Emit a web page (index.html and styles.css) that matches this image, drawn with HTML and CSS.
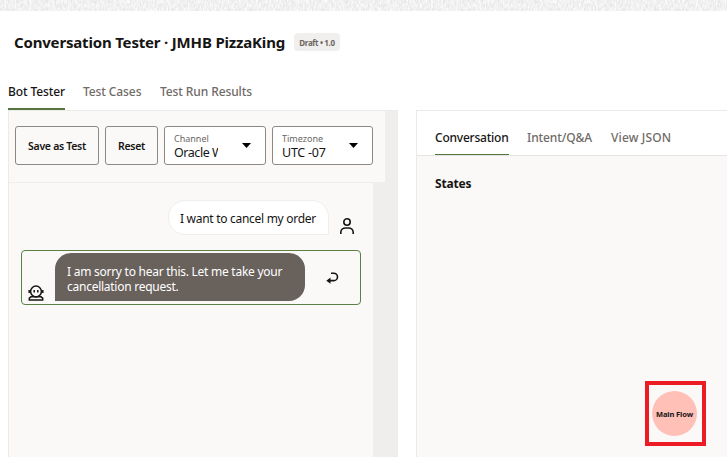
FILE: index.html
```html
<!DOCTYPE html>
<html lang="en">
<head>
<meta charset="utf-8">
<title>Conversation Tester</title>
<link rel="stylesheet" href="styles.css">
</head>
<body>
<svg class="texture" width="727" height="11" aria-hidden="true">
  <filter id="grain" x="0" y="0" width="100%" height="100%" color-interpolation-filters="sRGB">
    <feTurbulence type="fractalNoise" baseFrequency="0.6 0.25" numOctaves="2" seed="4"/>
    <feColorMatrix values="0.16 0 0 0 0.865  0.16 0 0 0 0.865  0.16 0 0 0 0.865  0 0 0 0 1"/>
  </filter>
  <rect width="727" height="11" filter="url(#grain)"/>
</svg>
<header class="header">
  <h1 class="title">Conversation Tester · JMHB PizzaKing</h1>
  <span class="badge">Draft • 1.0</span>
</header>
<nav class="tabs main-tabs">
  <span class="tab active bot"><span>Bot Tester</span></span>
  <span class="tab cases"><span>Test Cases</span></span>
  <span class="tab runs"><span>Test Run Results</span></span>
</nav>
<main class="panels">
  <section class="tester">
    <div class="toolbar">
      <button class="btn save">Save as Test</button>
      <button class="btn reset">Reset</button>
      <div class="select channel">
        <div class="field"><span class="label">Channel</span><span class="value">Oracle Web</span></div>
        <svg class="caret" width="9" height="5" viewBox="0 0 9 5"><path d="M0 0h9L4.500 5z"/></svg>
      </div>
      <div class="select timezone">
        <div class="field"><span class="label">Timezone</span><span class="value">UTC -07</span></div>
        <svg class="caret" width="9" height="5" viewBox="0 0 9 5"><path d="M0 0h9L4.500 5z"/></svg>
      </div>
    </div>
    <div class="chat">
      <div class="user-row">
        <div class="user-bubble">I want to cancel my order</div>
        <svg class="person" width="14" height="16" viewBox="0 0 14 16" fill="none" stroke="#161513" stroke-width="1.600"><circle cx="7" cy="4" r="3.200"/><path d="M.8 16v-1.600C.8 11.700 3 10 5.500 10h3c2.500 0 4.700 1.700 4.700 4.400V16"/></svg>
      </div>
      <div class="bot-row">
        <svg class="robot" width="16" height="16" viewBox="0 0 16 16" fill="none" stroke="#161513" stroke-width="1.500"><circle cx="8" cy="6.500" r="5.400"/><path d="M1.200 5v3M14.800 5v3M1.300 15v-1.800l1.700-1.400h10l1.700 1.400V15z"/><path d="M6.200 5v2.400M9.800 5v2.400"/></svg>
        <div class="bot-bubble">I am sorry to hear this. Let me take your cancellation request.</div>
        <svg class="reply" width="13" height="13" viewBox="0 0 13 13" fill="none" stroke="#161513" stroke-width="1.600"><path d="M5 1.200h2.800a3.700 3.700 0 0 1 0 7.400H2"/><path d="M4.500 5.500v6.300L.3 8.700z" fill="#161513" stroke="none"/></svg>
      </div>
    </div>
  </section>
  <section class="details">
    <nav class="tabs detail-tabs">
      <span class="tab active conv"><span>Conversation</span></span>
      <span class="tab intent"><span>Intent/Q&amp;A</span></span>
      <span class="tab json"><span>View JSON</span></span>
    </nav>
    <div class="states">
      <h2 class="states-title">States</h2>
      <div class="highlight"><div class="node">Main Flow</div></div>
    </div>
  </section>
</main>
</body>
</html>
```
FILE: styles.css
```css
* { box-sizing: border-box; }
body {
  margin: 0;
  width: 727px;
  height: 457px;
  overflow: hidden;
  display: flex;
  flex-direction: column;
  background: #fff;
  color: #161513;
  font-family: "Noto Sans", "Open Sans", sans-serif;
  font-size: 12px;
}
svg { display: block; flex: none; }
.texture { height: 11px; }
.header {
  height: 62px;
  flex: none;
  display: flex;
  align-items: center;
  padding-left: 14px;
  gap: 9px;
}
.title {
  margin: 0;
  width: 271px;
  font-size: 15px;
  font-weight: 700;
  letter-spacing: -0.18px;
  white-space: nowrap;
}
.badge {
  width: 46px;
  height: 18px;
  line-height: 19px;
  border-radius: 4px;
  background: #f1efed;
  color: #6b6560;
  font-size: 8px;
  font-weight: 700;
  letter-spacing: -0.35px;
  text-align: center;
  white-space: nowrap;
}
.tabs { display: flex; flex: none; gap: 18px; }
.tab {
  font-size: 12px;
  font-weight: 500;
  letter-spacing: -0.1px;
  color: #6f6b67;
  white-space: nowrap;
  border-bottom: 2px solid transparent;
}
.active { color: #161513; border-color: #55773f; }
.main-tabs { height: 37px; padding-left: 8px; line-height: 37px; }
.main-tabs .tab { height: 37px; }
.bot { width: 57px; }
.cases { width: 59px; }
.panels {
  flex: 1;
  display: flex;
  gap: 18px;
  padding-left: 8px;
}
.tester {
  width: 390px;
  background: #efeeec;
  border-left: 1px solid #ebeae8;
  border-top: 1px solid #ebeae8;
  display: flex;
  flex-direction: column;
}
.toolbar {
  width: 376px;
  height: 72px;
  padding: 15px 0 0 6px;
  display: flex;
  background: #faf9f8;
  border-bottom: 1px solid #efeeec;
}
.btn, .select {
  height: 39px;
  border: 1px solid #8b8885;
  border-radius: 3px;
}
.btn {
  padding: 0;
  background: transparent;
  color: #161513;
  font: 600 10.5px "Noto Sans", sans-serif;
  letter-spacing: -0.3px;
  white-space: nowrap;
}
.save { width: 84px; margin-right: 6px; }
.reset { width: 53px; margin-right: 6px; }
.select {
  display: flex;
  align-items: center;
  justify-content: space-between;
  background: #fff;
  padding: 0 14px 0 9px;
}
.channel { width: 102px; margin-right: 6px; }
.timezone { width: 101px; }
.field { width: 45px; overflow: hidden; white-space: nowrap; }
.channel .field { width: 44px; }
.label, .value { display: block; }
.label { font-size: 9px; line-height: 12px; color: #6b6763; margin-top: 1px; }
.value { font-size: 12.5px; line-height: 15px; letter-spacing: -0.25px; }
.channel .value { letter-spacing: -0.45px; }
.chat {
  flex: 1;
  width: 364px;
  padding: 17px 12px 0;
  background: #faf9f8;
}
.user-row { display: flex; justify-content: flex-end; gap: 11px; padding-right: 7px; }
.user-bubble {
  width: 161px;
  height: 35px;
  padding-left: 11px;
  line-height: 36px;
  letter-spacing: -0.29px;
  background: #fff;
  border: 1px solid #efeeec;
  border-radius: 17px 17px 0 17px;
  white-space: nowrap;
}
.person { margin-top: 18px; }
.bot-row {
  width: 340px;
  height: 55px;
  margin-top: 15px;
  padding: 2px 0 0 6px;
  display: flex;
  border: 1px solid #5b8045;
  border-radius: 4px;
}
.robot { margin-top: 32px; }
.bot-bubble {
  width: 250px;
  height: 48px;
  margin-left: 11px;
  padding: 11px 15px 0 12px;
  background: #69615c;
  border-radius: 16px 16px 16px 0;
  color: #fff;
  line-height: 15px;
  letter-spacing: -0.26px;
}
.reply { margin: 19px 0 0 21px; }
.details {
  flex: 1;
  display: flex;
  flex-direction: column;
  border-left: 1px solid #ebeae8;
  border-top: 1px solid #ebeae8;
}
.detail-tabs {
  height: 45px;
  padding: 10px 0 0 18px;
  border-bottom: 1px solid #e5e4e2;
  line-height: 34px;
}
.detail-tabs .tab { height: 34px; border-bottom-width: 1px; }
.conv { width: 74px; letter-spacing: -0.22px; }
.intent { width: 66px; }
.json { letter-spacing: 0.15px; }
.states {
  flex: 1;
  display: flex;
  flex-direction: column;
  justify-content: space-between;
  padding: 19px 21px 11px 18px;
  background: #faf9f8;
}
.states-title { margin: 0; font-size: 12px; line-height: 18px; font-weight: 700; letter-spacing: -0.2px; }
.highlight {
  align-self: flex-end;
  width: 61px;
  height: 65px;
  padding: 6px 3px;
  border: 4px solid #ed1c24;
}
.node {
  width: 45px;
  height: 45px;
  border-radius: 50%;
  background: #ffc0b8;
  font-size: 7.5px;
  font-weight: 700;
  letter-spacing: -0.1px;
  line-height: 46px;
  text-align: center;
  white-space: nowrap;
}
```
